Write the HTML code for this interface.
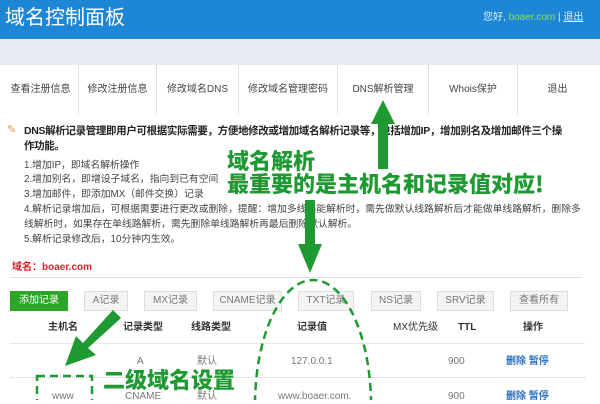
<!DOCTYPE html>
<html><head><meta charset="utf-8"><style>
*{margin:0;padding:0;box-sizing:border-box}
body{width:600px;height:400px;overflow:hidden;background:#fff;position:relative;font-family:"Liberation Sans","Noto Sans CJK SC",sans-serif;color:#333}
.a{position:absolute;white-space:nowrap;line-height:14px}
#hd{left:0;top:0;width:600px;height:39px;background:#1d87d6}
#band{left:0;top:39px;width:600px;height:26px;background:#e6ebf1}
.nav{top:65px;height:50px;border-right:1px solid #e2e2e2;background:#fff;font-size:10px;color:#444;display:flex;align-items:center;justify-content:center}
.t{font-size:9.8px;color:#444}
.b{font-weight:bold;font-size:10.5px;color:#222;letter-spacing:-0.35px}
.btn{top:291px;height:20px;border:1px solid #ddd;background:#f4f4f4;font-size:10px;color:#777;display:flex;align-items:center;justify-content:center}
.th{top:321px;font-size:10px;font-weight:bold;color:#333}
.td{font-size:10px;color:#777}
.g{color:#1f9a32;font-weight:900;font-family:"WenQuanYi Zen Hei","Noto Sans CJK SC",sans-serif}
</style></head><body>
<div class="a" id="hd"></div>
<div class="a" style="left:5px;top:6px;font-size:20px;line-height:24px;color:#fff">域名控制面板</div>
<div class="a" style="left:483px;top:11px;font-size:10px;color:#dfeefa">您好, <span style="color:#8fe04a">boaer.com</span> | <u>退出</u></div>
<div class="a" id="band"></div>
<div class="a nav" style="left:3px;width:76px">查看注册信息</div>
<div class="a nav" style="left:79px;width:78px">修改注册信息</div>
<div class="a nav" style="left:157px;width:82px">修改域名DNS</div>
<div class="a nav" style="left:239px;width:99px">修改域名管理密码</div>
<div class="a nav" style="left:338px;width:91px">DNS解析管理</div>
<div class="a nav" style="left:429px;width:89px">Whois保护</div>
<div class="a nav" style="left:518px;width:79px;border-right:none">退出</div>
<div class="a" style="left:7px;top:123px;font-size:11px;color:#e8903a">✎</div>
<div class="a b" style="left:24px;top:124px">DNS解析记录管理即用户可根据实际需要，方便地修改或增加域名解析记录等，包括增加IP，增加别名及增加邮件三个操</div>
<div class="a b" style="left:24px;top:139px">作功能。</div>
<div class="a t" style="left:24px;top:159px">1.增加IP，即域名解析操作</div>
<div class="a t" style="left:24px;top:173px">2.增加别名，即增设子域名，指向到已有空间</div>
<div class="a t" style="left:24px;top:188px">3.增加邮件，即添加MX（邮件交换）记录</div>
<div class="a t" style="left:24px;top:203px">4.解析记录增加后，可根据需要进行更改或删除，提醒：增加多线路能解析时，需先做默认线路解析后才能做单线路解析，删除多</div>
<div class="a t" style="left:24px;top:218px">线解析时，如果存在单线路解析，需先删除单线路解析再最后删除默认解析。</div>
<div class="a t" style="left:24px;top:233px">5.解析记录修改后，10分钟内生效。</div>
<div class="a" style="left:12px;top:261px;font-size:10px;font-weight:bold;color:#d8202a">域名：boaer.com</div>
<div class="a" style="left:10px;top:277px;width:572px;height:1px;background:#ddd"></div>
<div class="a btn" style="left:10px;width:58px;background:#2da527;border-color:#2da527;color:#fff">添加记录</div>
<div class="a btn" style="left:84px;width:44px">A记录</div>
<div class="a btn" style="left:144px;width:53px">MX记录</div>
<div class="a btn" style="left:213px;width:69px">CNAME记录</div>
<div class="a btn" style="left:298px;width:56px">TXT记录</div>
<div class="a btn" style="left:371px;width:50px">NS记录</div>
<div class="a btn" style="left:437px;width:57px">SRV记录</div>
<div class="a btn" style="left:510px;width:58px">查看所有</div>
<div class="a th" style="left:48px">主机名</div>
<div class="a th" style="left:123px">记录类型</div>
<div class="a th" style="left:191px">线路类型</div>
<div class="a th" style="left:297px">记录值</div>
<div class="a th" style="left:393px;font-weight:normal">MX优先级</div>
<div class="a th" style="left:458px">TTL</div>
<div class="a th" style="left:523px">操作</div>
<div class="a" style="left:10px;top:343px;width:575px;height:1px;background:#e6e6e6"></div>
<div class="a td" style="left:137px;top:355px">A</div>
<div class="a td" style="left:197px;top:355px">默认</div>
<div class="a td" style="left:291px;top:355px">127.0.0.1</div>
<div class="a td" style="left:448px;top:355px">900</div>
<div class="a" style="left:506px;top:355px;font-size:10px;font-weight:bold;color:#2a6fc0">删除 暂停</div>
<div class="a" style="left:10px;top:377px;width:575px;border-top:1px dotted #ccc"></div>
<div class="a td" style="left:52px;top:390px">www</div>
<div class="a td" style="left:125px;top:390px">CNAME</div>
<div class="a td" style="left:197px;top:390px">默认</div>
<div class="a td" style="left:278px;top:390px">www.boaer.com.</div>
<div class="a td" style="left:448px;top:390px">900</div>
<div class="a" style="left:506px;top:390px;font-size:10px;font-weight:bold;color:#2a6fc0">删除 暂停</div>
<div class="a g" style="left:227px;top:148px;font-size:22px;line-height:24px">域名解析</div>
<div class="a g" style="left:227px;top:171px;font-size:22px;line-height:24px">最重要的是主机名和记录值对应!</div>
<div class="a g" style="left:103px;top:366px;font-size:22px;line-height:26px">二级域名设置</div>
<svg class="a" style="left:0;top:0" width="600" height="400">
<g fill="#1f9a32">
<rect x="378" y="122" width="10" height="47"/><polygon points="371,124 395,124 383,100"/>
<rect x="305" y="200" width="10" height="46"/><polygon points="298,244 322,244 310,273"/>
<polygon points="113,310 121,318 88,348 96,355 65,366 76,336 83,343"/>
</g>
<g fill="none" stroke="#1f9a32" stroke-width="2.5" stroke-dasharray="8,5">
<ellipse cx="313" cy="405" rx="58" ry="125"/>
<rect x="37" y="376" width="55" height="32"/>
</g>
</svg>
</body></html>
